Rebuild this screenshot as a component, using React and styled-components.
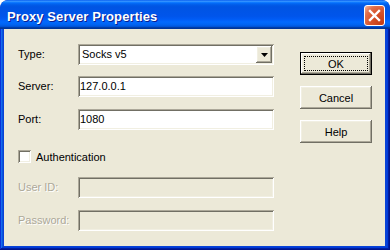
import React from 'react';
import styled, { createGlobalStyle } from 'styled-components';

const Global = createGlobalStyle`
  html, body { margin: 0; padding: 0; background: #ffffff; }
  body {
    width: 390px; height: 250px; overflow: hidden;
    font-family: "Liberation Sans", Arial, sans-serif;
  }
`;

const sunken = `
  box-shadow: inset 1px 1px #aca899, inset -1px -1px #ffffff,
    inset 2px 2px #716f64, inset -2px -2px #f1efe2;
`;
const raised = `
  box-shadow: inset -1px -1px #716f64, inset 1px 1px #ffffff,
    inset -2px -2px #aca899, inset 2px 2px #f1efe2;
`;

const Window = styled.div`
  width: 390px;
  height: 250px;
  display: flex;
  flex-direction: column;
  border-radius: 8px 8px 0 0;
  overflow: hidden;
  background: #0842d7;
`;

const TitleBar = styled.div`
  height: 29px;
  flex: none;
  box-sizing: border-box;
  display: flex;
  align-items: flex-start;
  justify-content: space-between;
  padding: 0 5px 0 7px;
  border-radius: 8px 8px 0 0;
  background: linear-gradient(
    to bottom,
    #0058ee 0%, #3a93ff 4%, #288eff 6%, #127dff 8%, #036ffc 10%,
    #0262ee 14%, #0057e5 20%, #0054e3 24%, #0055eb 56%, #005bf5 66%,
    #026afe 76%, #0062ef 86%, #0052d6 92%, #0040ab 94%, #003092 100%
  );
`;

const TitleText = styled.span`
  margin-top: 9px;
  color: #ffffff;
  font: bold 13px/15px "Liberation Sans", Arial, sans-serif;
  text-shadow: 1px 1px #0a1e8f;
  letter-spacing: 0.1px;
`;

const CloseButton = styled.div`
  margin-top: 5px;
  width: 21px;
  height: 21px;
  box-sizing: border-box;
  border: 1px solid #ffffff;
  border-radius: 3px;
  display: flex;
  align-items: center;
  justify-content: center;
  background: radial-gradient(circle at 90% 90%, #c43c14 0%, #d8542c 50%, #e0704c 75%, #f4b8a0 100%);
`;

const Frame = styled.div`
  flex: 1;
  display: flex;
  padding: 0 5px 4px 4px;
  box-shadow: inset -1px -1px #00138c, inset 1px 0 #0831d9,
    inset -2px -2px #001ea0, inset 2px 0 #166aee,
    inset -3px -3px #003bda, inset 3px 0 #0855dd;
`;

const Client = styled.div`
  flex: 1;
  display: flex;
  align-items: flex-start;
  padding: 15px 0 0 14px;
  background: #ece9d8;
  font-size: 11px;
  color: #000000;
`;

const Form = styled.div`
  width: 256px;
  display: flex;
  flex-direction: column;
`;

const Row = styled.div`
  display: grid;
  grid-template-columns: 60px 196px;
  align-items: center;
  height: 21px;
  margin-top: ${p => p.$mt || 0}px;
`;

const Label = styled.span`
  font-size: 11px;
  line-height: 13px;
  color: ${p => (p.$disabled ? '#aca899' : '#000000')};
  text-shadow: ${p => (p.$disabled ? '1px 1px #ffffff' : 'none')};
`;

const Field = styled.div`
  height: 21px;
  box-sizing: border-box;
  padding: 2px 2px 2px 2px;
  display: flex;
  align-items: center;
  background: ${p => (p.$disabled ? '#ece9d8' : '#ffffff')};
  ${sunken}
  font-size: 11px;
  line-height: 13px;
`;

const ComboValue = styled.span`
  flex: 1;
  padding-left: 2px;
`;

const DropButton = styled.div`
  width: 16px;
  height: 17px;
  box-sizing: border-box;
  display: flex;
  align-items: center;
  justify-content: center;
  background: #ece9d8;
  ${raised}
`;

const CheckRow = styled.label`
  display: flex;
  align-items: center;
  gap: 5px;
  height: 21px;
  margin-top: ${p => p.$mt || 0}px;
  font-size: 11px;
`;

const CheckBox = styled.span`
  width: 13px;
  height: 13px;
  box-sizing: border-box;
  background: #ffffff;
  ${sunken}
`;

const Buttons = styled.div`
  display: flex;
  flex-direction: column;
  gap: 11px;
  margin-left: 26px;
  padding-top: 8px;
`;

const Button = styled.div`
  position: relative;
  width: 72px;
  height: 23px;
  box-sizing: border-box;
  display: flex;
  align-items: center;
  justify-content: center;
  background: #ece9d8;
  font-size: 11px;
  color: #000000;
  ${p =>
    p.$default
      ? `border: 1px solid #000000;
         box-shadow: inset -1px -1px #716f64, inset 1px 1px #ffffff,
           inset -2px -2px #aca899, inset 2px 2px #f1efe2;`
      : raised}
  &::after {
    content: '';
    display: ${p => (p.$default ? 'block' : 'none')};
    position: absolute;
    inset: 3px;
    border: 1px dotted #000000;
  }
`;

export default function App() {
  return (
    <>
      <Global />
      <Window>
        <TitleBar>
          <TitleText>Proxy Server Properties</TitleText>
          <CloseButton>
            <svg width="19" height="19" viewBox="0 0 19 19">
              <path d="M5 5 L14 14 M14 5 L5 14" stroke="#ffffff" strokeWidth="2.4" strokeLinecap="square" />
            </svg>
          </CloseButton>
        </TitleBar>
        <Frame>
          <Client>
            <Form>
              <Row>
                <Label>Type:</Label>
                <Field>
                  <ComboValue>Socks v5</ComboValue>
                  <DropButton>
                    <svg width="7" height="4" viewBox="0 0 7 4">
                      <polygon points="0,0 7,0 3.5,4" fill="#000000" />
                    </svg>
                  </DropButton>
                </Field>
              </Row>
              <Row $mt={11}>
                <Label>Server:</Label>
                <Field>127.0.0.1</Field>
              </Row>
              <Row $mt={12}>
                <Label>Port:</Label>
                <Field>1080</Field>
              </Row>
              <CheckRow $mt={16}>
                <CheckBox />
                <span>Authentication</span>
              </CheckRow>
              <Row $mt={10}>
                <Label $disabled>User ID:</Label>
                <Field $disabled />
              </Row>
              <Row $mt={12}>
                <Label $disabled>Password:</Label>
                <Field $disabled />
              </Row>
            </Form>
            <Buttons>
              <Button $default>OK</Button>
              <Button>Cancel</Button>
              <Button>Help</Button>
            </Buttons>
          </Client>
        </Frame>
      </Window>
    </>
  );
}
